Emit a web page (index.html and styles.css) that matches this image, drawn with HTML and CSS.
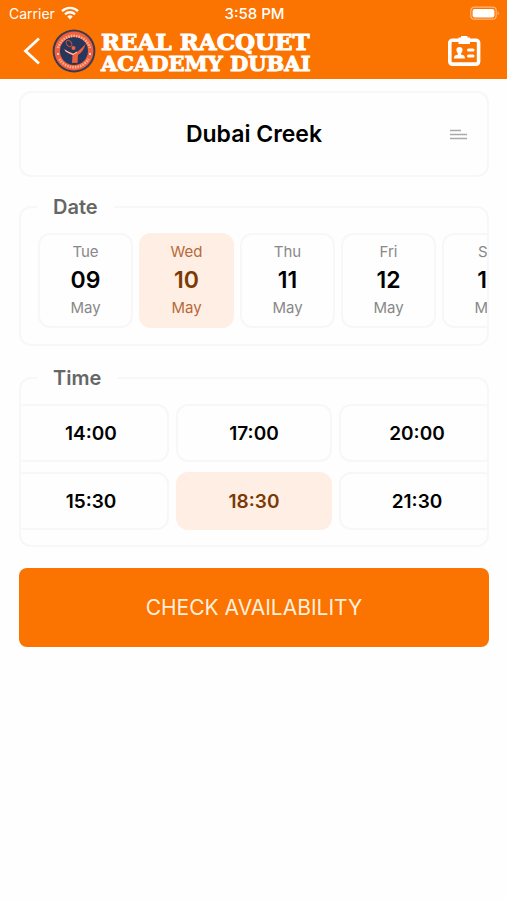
FILE: index.html
```
<!DOCTYPE html>
<html lang="en">
<head>
    <meta charset="UTF-8">
    <meta name="viewport" content="width=device-width, initial-scale=1.0">
    <title>Real Racquet Academy Dubai</title>
    <link rel="stylesheet" href="styles.css">
</head>
<body>

    <header>
        <div class="status-bar">
            <div class="carrier">
                <span>Carrier</span>
                <svg width="18" height="14" viewBox="0 0 18 14" fill="none" stroke="#fff" stroke-width="2.4">
                    <path d="M1 5.2a11.4 11.4 0 0 1 16 0"/>
                    <path d="M4 8.3a7.2 7.2 0 0 1 10 0"/>
                    <path d="M9 13.4l-2.7-2.8a3.9 3.9 0 0 1 5.4 0z" fill="#fff" stroke="none"/>
                </svg>
            </div>
            <span class="clock">3:58 PM</span>
            <svg class="battery" width="30" height="14" viewBox="0 0 30 14">
                <rect x="0.8" y="1.2" width="25.4" height="12" rx="3.5" fill="none" stroke="#ffb57a" stroke-width="1.2"/>
                <rect x="2.6" y="3" width="21.8" height="8.4" rx="2" fill="#fff"/>
                <path d="M27.6 5.2q2.6 2 0 4z" fill="#ffb57a"/>
            </svg>
        </div>
        <div class="nav-bar">
            <button type="button" class="icon-button" aria-label="Back">
                <svg width="18" height="28" viewBox="0 0 18 28" fill="none" stroke="#fff" stroke-width="2.8">
                    <path d="M16 1.5L2.5 14L16 26.5"/>
                </svg>
            </button>
            <div class="brand">
                <svg class="crest" width="44" height="44" viewBox="0 0 44 44">
                    <circle cx="22" cy="22" r="21.4" fill="#3a3a52"/>
                    <circle cx="22" cy="22" r="19.4" fill="#f0603c"/>
                    <circle cx="22" cy="22" r="14" fill="#26365c"/>
                    <g fill="none" stroke="#ffb08c" stroke-width="2.6" stroke-dasharray="1.6 1">
                        <path d="M6 19a16.6 16.6 0 0 1 32 0"/>
                        <path d="M7.5 30a16.8 16.8 0 0 0 29 0"/>
                    </g>
                    <g fill="#fff">
                        <circle cx="6" cy="25" r="1"/>
                        <circle cx="38" cy="25" r="1"/>
                    </g>
                    <ellipse cx="17" cy="14.5" rx="2.4" ry="3.4" transform="rotate(-35 17 14.5)" fill="none" stroke="#b9543f" stroke-width="1"/>
                    <circle cx="21.5" cy="19" r="2" fill="#f0603c"/>
                    <path d="M11.5 19.5q5 4 10.500 5q5-2 11.500-9.500q-2 7.500-7.500 11l-.5 8q-3-.5-5.500 0l.5-8q-6-1.500-9-6.500z" fill="#f0603c"/>
                    <path d="M13 21.500l8 4 4-2.500" fill="none" stroke="#ffd9c4" stroke-width="1"/>
                </svg>
                <div class="brand-name">
                    <span class="brand-top">REAL RACQUET</span>
                    <span class="brand-bottom">ACADEMY DUBAI</span>
                </div>
            </div>
            <button type="button" class="icon-button" aria-label="Membership card">
                <svg width="34" height="32" viewBox="0 0 34 32">
                    <rect x="2.800" y="5.300" width="28.800" height="23.800" rx="2.500" fill="none" stroke="#fff" stroke-width="3.600"/>
                    <path d="M14 1h6.500v1.500H23v6.500H11.500V2.500H14z" fill="#fff"/>
                    <path d="M12.500 12c4 0 3.600 4.600 1.600 6.200v1.200c2.200.6 3.900 1 3.900 4.100H7c0-3.100 1.700-3.500 3.900-4.100v-1.200C8.900 16.600 8.500 12 12.500 12z" fill="#fff"/>
                    <path d="M21.500 15h4.500M21.500 21h4.500" stroke="#fff" stroke-width="3" stroke-linecap="round"/>
                </svg>
            </button>
        </div>
    </header>

    <main>
        <button type="button" class="location">
            <span>Dubai Creek</span>
            <svg width="17" height="11" viewBox="0 0 17 11" stroke="#aaa" stroke-width="1.300">
                <path d="M0 1.500h11M0 5.500h17M0 9.500h17"/>
            </svg>
        </button>

        <fieldset>
            <legend>Date</legend>
            <div class="dates">
                <button type="button" class="day">Tue<strong>09</strong>May</button>
                <button type="button" class="day selected">Wed<strong>10</strong>May</button>
                <button type="button" class="day">Thu<strong>11</strong>May</button>
                <button type="button" class="day">Fri<strong>12</strong>May</button>
                <button type="button" class="day">Sat<strong>13</strong>May</button>
            </div>
        </fieldset>

        <fieldset>
            <legend>Time</legend>
            <div class="times">
                <button type="button" class="slot">14:00</button>
                <button type="button" class="slot">17:00</button>
                <button type="button" class="slot">20:00</button>
                <button type="button" class="slot">15:30</button>
                <button type="button" class="slot selected">18:30</button>
                <button type="button" class="slot">21:30</button>
            </div>
        </fieldset>

        <button type="submit" class="check">CHECK AVAILABILITY</button>
    </main>

    <script>
        // one selected day and one selected slot at a time
        document.querySelectorAll('.dates, .times').forEach(group => {
            group.addEventListener('click', function(event) {
                const button = event.target.closest('button');
                if (!button) return;
                group.querySelectorAll('button').forEach(btn => btn.classList.remove('selected'));
                button.classList.add('selected');
            });
        });
    </script>
</body>
</html>
```
FILE: styles.css
```
* {
    box-sizing: border-box;
}

body {
    font-family: Inter, "Open Sans", sans-serif;
    background-color: #fefefe;
    margin: 0;
}

button {
    font-family: inherit;
    padding: 0;
    border: none;
    background: none;
    cursor: pointer;
}

svg {
    display: block;
    flex-shrink: 0;
}

header {
    background-color: #fb7300;
    color: #fff;
}

.status-bar {
    display: grid;
    grid-template-columns: 1fr auto 1fr;
    align-items: center;
    height: 26px;
    padding: 0 7px 0 9px;
    font-size: 14px;
}

.carrier {
    display: flex;
    align-items: center;
    gap: 6px;
}

.clock {
    font-size: 15px;
    font-weight: 500;
}

.battery {
    justify-self: end;
}

.nav-bar {
    display: flex;
    align-items: center;
    height: 53px;
    padding: 0 26px 4px 23px;
}

.brand {
    display: flex;
    align-items: center;
    gap: 5px;
    flex-grow: 1;
    margin-left: 11px;
}

.brand-name {
    display: flex;
    flex-direction: column;
    padding-top: 2px;
    font-family: "DejaVu Serif", serif;
    font-weight: bold;
    white-space: nowrap;
    -webkit-text-stroke: 1px #fff;
}

.brand-top {
    font-size: 23px;
    line-height: 23px;
}

.brand-bottom {
    font-size: 21px;
    line-height: 21px;
}

main {
    display: flex;
    flex-direction: column;
    padding: 12px 18px 24px 19px;
}

.location {
    display: grid;
    grid-template-columns: 1fr auto 1fr;
    align-items: center;
    height: 86px;
    padding: 0 20px;
    border: 2px solid #f7f7f7;
    border-radius: 12px;
    font-size: 23px;
    font-weight: 600;
    color: #000;
}

.location span {
    grid-column: 2;
}

.location svg {
    justify-self: end;
}

fieldset {
    min-width: 0;
    margin: 18px 0 0;
    padding: 0;
    border: 2px solid #f7f7f7;
    border-radius: 12px;
}

fieldset + fieldset {
    margin-top: 20px;
}

legend {
    margin-left: 16px;
    padding: 0 16px;
    font-size: 20px;
    font-weight: 600;
    line-height: 24px;
    color: #666;
}

.dates {
    display: flex;
    gap: 6px;
    padding: 14px 0 16px 17px;
    overflow: hidden;
}

.day {
    display: flex;
    flex-direction: column;
    align-items: center;
    flex: 0 0 95px;
    height: 95px;
    padding-top: 8px;
    border: 2px solid #f7f7f7;
    border-radius: 12px;
    font-size: 15px;
    line-height: 18px;
    color: #888;
}

.day strong {
    font-size: 23px;
    font-weight: 600;
    line-height: 38px;
    color: #000;
}

.times {
    display: grid;
    grid-template-columns: repeat(3, 156px);
    gap: 10px 7px;
    justify-content: center;
    padding: 14px 0 15px;
    overflow: hidden;
}

.slot {
    height: 58px;
    border: 2px solid #f7f7f7;
    border-radius: 12px;
    font-size: 19px;
    font-weight: 600;
    color: #000;
}

.day.selected,
.slot.selected {
    background-color: #feeee3;
    border-color: #feeee3;
    color: #b56a3a;
}

.slot.selected,
.day.selected strong {
    color: #7a3a05;
}

.check {
    height: 79px;
    margin-top: 21px;
    border-radius: 8px;
    background-color: #fb7300;
    font-size: 21px;
    color: #ffefdc;
}
```
